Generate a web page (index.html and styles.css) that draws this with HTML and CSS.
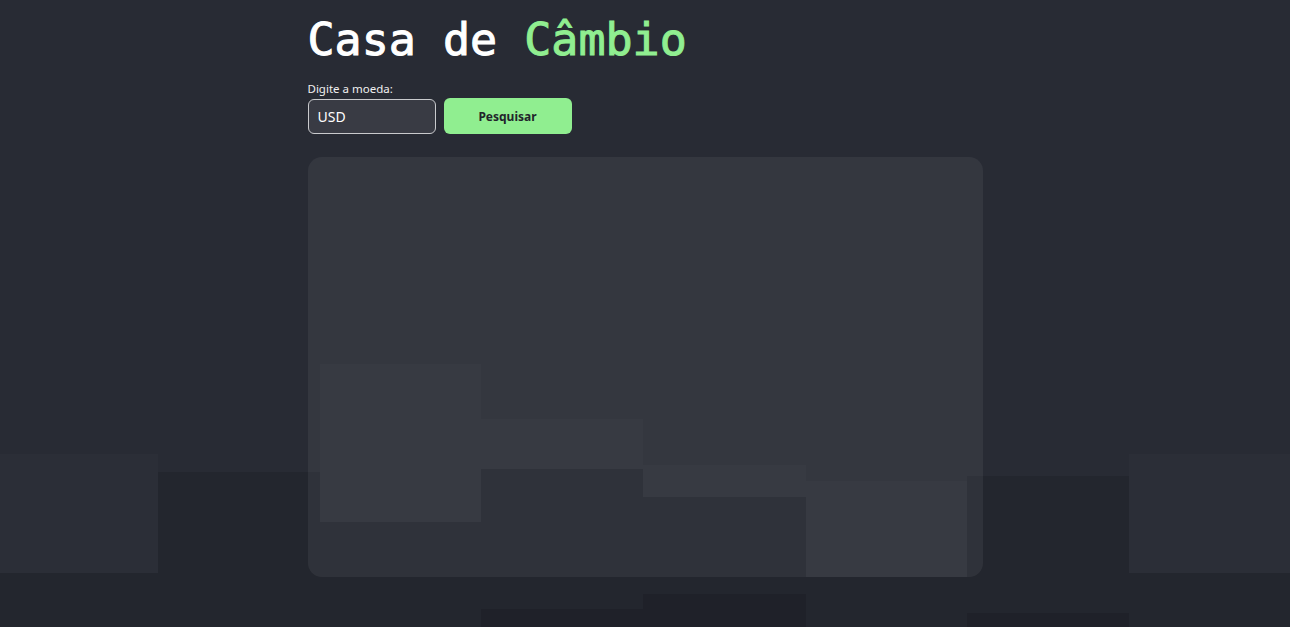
FILE: index.html
```html
<!DOCTYPE html>
<html lang="pt-BR">
<head>
<meta charset="utf-8">
<title>Casa de Câmbio</title>
<link rel="stylesheet" href="styles.css">
</head>
<body>
  <main class="page">
    <h1 class="title">Casa de <span class="accent">Câmbio</span></h1>
    <form class="search">
      <label class="label" for="coin">Digite a moeda:</label>
      <div class="controls">
        <input class="input" id="coin" type="text" value="USD">
        <button class="button" type="button">Pesquisar</button>
      </div>
    </form>
    <section class="results"></section>
  </main>
</body>
</html>
```

FILE: styles.css
```css
html, body {
  margin: 0;
  padding: 0;
}

body {
  min-height: 100vh;
  background-color: #282b34;
  background-repeat: no-repeat;
  background-image:
    linear-gradient(#282b34 0 454px, #2b2e37 454px 573px, #23262e 573px),
    linear-gradient(#282b34 0 472px, #23262e 472px),
    linear-gradient(#282b34 0 364px, #2b2e37 364px 522px, #23262e 522px),
    linear-gradient(#282b34 0 419px, #2b2e37 419px 469px, #23262e 469px 609px, #1f2129 609px),
    linear-gradient(#282b34 0 465px, #2b2e37 465px 497px, #23262e 497px 594px, #1f2129 594px),
    linear-gradient(#282b34 0 481px, #2b2e37 481px 577px, #23262e 577px),
    linear-gradient(#282b34 0 476px, #23262e 476px 613px, #1f2129 613px),
    linear-gradient(#282b34 0 454px, #2b2e37 454px 573px, #23262e 573px);
  background-size:
    158px 100%, 162px 100%, 161px 100%, 162px 100%,
    163px 100%, 161px 100%, 162px 100%, 161px 100%;
  background-position:
    0 0, 158px 0, 320px 0, 481px 0,
    643px 0, 806px 0, 967px 0, 1129px 0;
  color: #ffffff;
  font-family: "Noto Sans", "Open Sans", sans-serif;
}

.page {
  width: 675px;
  margin: 0 auto;
  padding-top: 17px;
  display: flex;
  flex-direction: column;
}

.title {
  margin: 0;
  font-family: "DejaVu Sans Mono", "Liberation Mono", monospace;
  font-size: 45px;
  font-weight: normal;
  line-height: 45px;
  color: #ffffff;
  -webkit-text-stroke: 1px currentColor;
}

.accent {
  color: #90ee90;
}

.search {
  margin-top: 19px;
  display: flex;
  flex-direction: column;
  gap: 1px;
}

.label {
  font-size: 11.5px;
  line-height: 16px;
  color: #f0f0f0;
}

.controls {
  display: flex;
  align-items: center;
  gap: 8px;
}

.input {
  box-sizing: border-box;
  width: 128px;
  height: 35px;
  margin: 0;
  padding: 0 9px;
  border: 1px solid #c9cacd;
  border-radius: 6px;
  background: #393b44;
  color: #ffffff;
  font-family: "Noto Sans", "Open Sans", sans-serif;
  font-size: 14px;
  outline: none;
}

.button {
  box-sizing: border-box;
  width: 128px;
  height: 36px;
  margin: 0;
  border: none;
  border-radius: 6px;
  background: #90ee90;
  color: #22242b;
  font-family: "Noto Sans", "Open Sans", sans-serif;
  font-size: 12px;
  font-weight: bold;
  cursor: pointer;
}

.results {
  margin-top: 23px;
  height: 420px;
  border-radius: 14px;
  background: rgba(255, 255, 255, 0.06);
}
```
